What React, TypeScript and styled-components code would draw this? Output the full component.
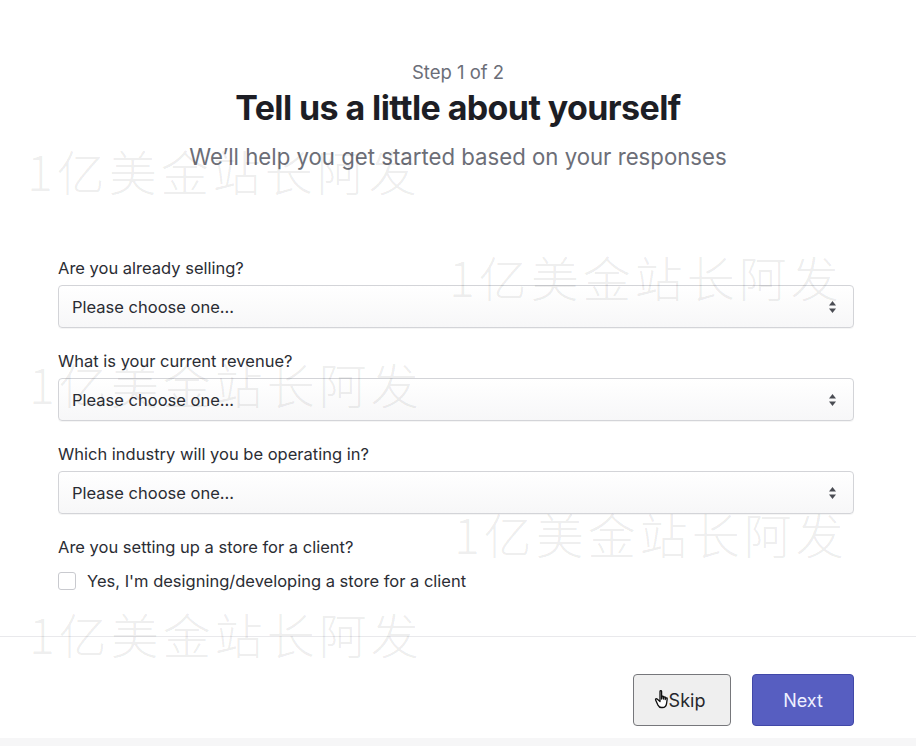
import React from "react";
import styled, { createGlobalStyle } from "styled-components";

const Global = createGlobalStyle`
  html, body { margin: 0; padding: 0; background: #ffffff; }
  body { font-family: Inter, "Noto Sans", "Liberation Sans", sans-serif; color: #23252d; }
  * { box-sizing: border-box; }
`;

const Page = styled.div`
  position: relative;
  width: 916px;
  height: 746px;
  overflow: hidden;
  display: flex;
  flex-direction: column;
  background: #fff;
`;

const Header = styled.header`
  padding-top: 60px;
  display: flex;
  flex-direction: column;
  align-items: center;
  text-align: center;
`;

const Step = styled.div`
  font-size: 18.5px;
  line-height: 24px;
  color: #6b6e78;
`;

const Title = styled.h1`
  margin: 4px 0 0;
  font-size: 34px;
  line-height: 40px;
  font-weight: 700;
  letter-spacing: -0.6px;
  color: #1d1e25;
`;

const Subtitle = styled.p`
  margin: 15px 0 0;
  font-size: 22.2px;
  line-height: 28px;
  color: #6c6e77;
`;

const Form = styled.form`
  margin: 87px 62px 0 58px;
  display: flex;
  flex-direction: column;
  gap: 23px;
`;

const Field = styled.div`
  display: flex;
  flex-direction: column;
  gap: 7px;
`;

const Label = styled.label`
  font-size: 16.5px;
  line-height: 20px;
  color: #2b2d34;
`;

const SelectBox = styled.div`
  position: relative;
  height: 43px;
  border: 1px solid #d3d4d8;
  border-radius: 4px;
  background: linear-gradient(#ffffff, #f7f7f8);
  box-shadow: 0 1px 0 rgba(0, 0, 0, 0.04);
  display: flex;
  align-items: center;
  justify-content: space-between;
  padding: 0 16px 0 13px;
  font-size: 16.5px;
  color: #2a2c33;
`;

const Arrows = styled.svg`
  width: 9px;
  height: 14px;
`;

const CheckRow = styled.div`
  display: flex;
  align-items: center;
  gap: 11px;
  margin-top: 7px;
  font-size: 16.5px;
  line-height: 20px;
  color: #2b2d34;
`;

const CheckBox = styled.span`
  width: 18px;
  height: 18px;
  border: 1px solid #c9cacf;
  border-radius: 3px;
  background: #fff;
`;

const Divider = styled.hr`
  margin: 45px 0 0;
  border: 0;
  border-top: 1px solid #e9e9ec;
`;

const Footer = styled.div`
  margin: 37px 62px 0 0;
  display: flex;
  justify-content: flex-end;
  gap: 21px;
`;

const Button = styled.button<{ $primary?: boolean }>`
  position: relative;
  height: 52px;
  width: ${(p) => (p.$primary ? "102px" : "98px")};
  border-radius: 4px;
  font-family: inherit;
  font-size: 18px;
  border: 1px solid ${(p) => (p.$primary ? "#4148a8" : "#76777b")};
  background: ${(p) => (p.$primary ? "#575ec1" : "#efefef")};
  color: ${(p) => (p.$primary ? "#eef0ff" : "#26272c")};
  display: flex;
  align-items: center;
  justify-content: center;
`;

const SkipText = styled.span`
  padding-left: 10px;
`;

const Cursor = styled.svg`
  position: absolute;
  left: 20px;
  top: 14px;
  width: 20px;
  height: 22px;
`;

const BottomStrip = styled.div`
  margin-top: auto;
  height: 8px;
  background: #f6f6f7;
`;

const Watermark = styled.div<{ $x: number; $y: number }>`
  position: absolute;
  left: ${(p) => p.$x}px;
  top: ${(p) => p.$y}px;
  font-family: "Noto Sans CJK SC", sans-serif;
  font-size: 48px;
  line-height: 52px;
  letter-spacing: 4px;
  font-weight: 300;
  color: rgba(0, 0, 0, 0.08);
  pointer-events: none;
  white-space: nowrap;
`;

const questions = [
  "Are you already selling?",
  "What is your current revenue?",
  "Which industry will you be operating in?",
];

const marks = [
  { x: 27, y: 144 },
  { x: 449, y: 250 },
  { x: 29, y: 357 },
  { x: 454, y: 507 },
  { x: 29, y: 607 },
];

export default function App() {
  return (
    <>
      <Global />
      <Page>
        <Header>
          <Step>Step 1 of 2</Step>
          <Title>Tell us a little about yourself</Title>
          <Subtitle>We’ll help you get started based on your responses</Subtitle>
        </Header>
        <Form>
          {questions.map((q) => (
            <Field key={q}>
              <Label>{q}</Label>
              <SelectBox>
                <span>Please choose one...</span>
                <Arrows viewBox="0 0 9 14">
                  <path d="M4.5 1 L8 5.5 H1 Z" fill="#4a4c53" />
                  <path d="M4.5 13 L8 8.5 H1 Z" fill="#4a4c53" />
                </Arrows>
              </SelectBox>
            </Field>
          ))}
          <Field>
            <Label>Are you setting up a store for a client?</Label>
            <CheckRow>
              <CheckBox />
              <span>Yes, I'm designing/developing a store for a client</span>
            </CheckRow>
          </Field>
        </Form>
        <Divider />
        <Footer>
          <Button type="button">
            <Cursor viewBox="0 0 20 22">
              <path
                d="M6 2.5c0-1 1.6-1 1.6 0V10l.4-2.2c.2-1 1.6-.8 1.5.2l-.1 2 .5-1.6c.3-.9 1.6-.6 1.5.3l-.2 1.8.6-1.2c.4-.8 1.6-.4 1.4.5l-.6 4.5c-.3 2.2-1.6 4.2-4.2 4.2H7.3c-1.5 0-2.6-1-3.3-2.4L1.6 11c-.4-.9.7-1.7 1.5-1L6 12.5z"
                fill="#fff"
                stroke="#111"
                strokeWidth="1.3"
                strokeLinejoin="round"
              />
            </Cursor>
            <SkipText>Skip</SkipText>
          </Button>
          <Button type="button" $primary>
            Next
          </Button>
        </Footer>
        <BottomStrip />
        {marks.map((m, i) => (
          <Watermark key={i} $x={m.x} $y={m.y}>
            1亿美金站长阿发
          </Watermark>
        ))}
      </Page>
    </>
  );
}
